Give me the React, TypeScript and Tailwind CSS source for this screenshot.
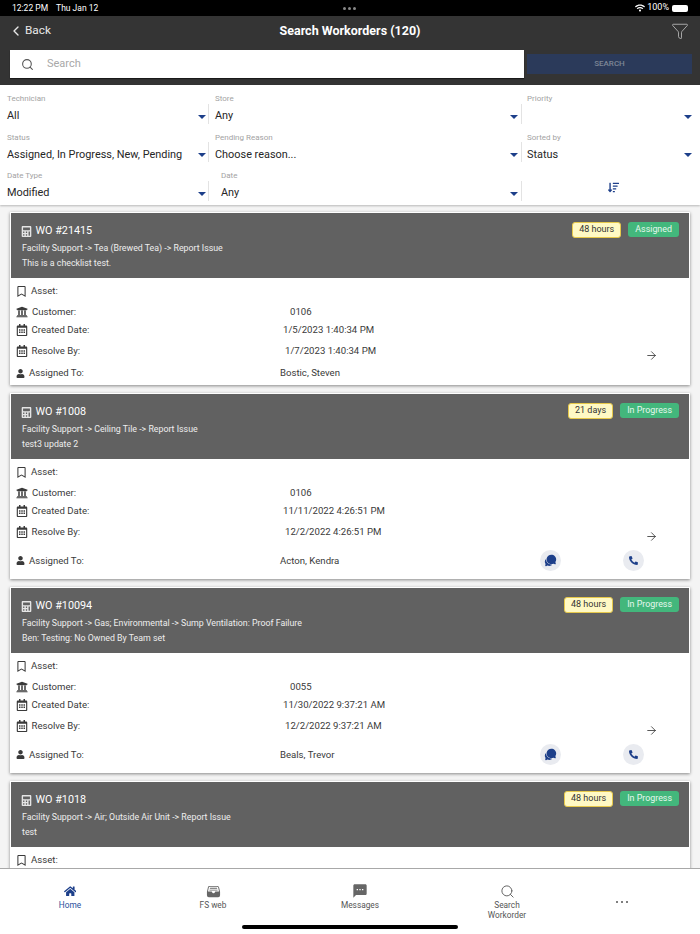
import { ReactNode } from 'react'
import { ChevronLeft, Funnel, Search, ArrowRight } from 'lucide-react'
import { FaCalculator, FaHome, FaPhoneAlt, FaRegBookmark, FaRegCalendarAlt, FaSortAmountDown, FaUniversity, FaUser, FaWifi } from 'react-icons/fa'
import { IoChatbubbles, IoFileTrayFull } from 'react-icons/io5'
import { MdSms } from 'react-icons/md'

const orders = [
  { id: '21415', age: '48 hours', status: 'Assigned', path: 'Facility Support -> Tea (Brewed Tea) -> Report Issue', note: 'This is a checklist test.', customer: '0106', created: '1/5/2023 1:40:34 PM', resolve: '1/7/2023 1:40:34 PM', tech: 'Bostic, Steven', contact: false },
  { id: '1008', age: '21 days', status: 'In Progress', path: 'Facility Support -> Ceiling Tile -> Report Issue', note: 'test3 update 2', customer: '0106', created: '11/11/2022 4:26:51 PM', resolve: '12/2/2022 4:26:51 PM', tech: 'Acton, Kendra', contact: true },
  { id: '10094', age: '48 hours', status: 'In Progress', path: 'Facility Support -> Gas; Environmental -> Sump Ventilation: Proof Failure', note: 'Ben: Testing: No Owned By Team set', customer: '0055', created: '11/30/2022 9:37:21 AM', resolve: '12/2/2022 9:37:21 AM', tech: 'Beals, Trevor', contact: true },
  { id: '1018', age: '48 hours', status: 'In Progress', path: 'Facility Support -> Air; Outside Air Unit -> Report Issue', note: 'test', customer: '', created: '', resolve: '', tech: '', contact: false },
]

function Caret() {
  return <span className="h-0 w-0 border-x-[4px] border-t-[4px] border-x-transparent border-t-[#1d3f8a]" />
}

function Filter({ label, value, width, pad = 'pl-[7px] pr-[3px]', divider = true }: { label: string; value: string; width: string; pad?: string; divider?: boolean }) {
  return (
    <div className={`${width} relative h-[38.5px] ${pad}`}>
      <div className="pt-[9px] text-[8px] leading-[10px] text-[#a3a3a3]">{label}</div>
      <div className="mt-[3.5px] flex h-[18px] items-center justify-between text-[10.9px] text-[#262626]">
        <span className="whitespace-nowrap">{value}</span>
        <Caret />
      </div>
      {divider && <span className="absolute bottom-0 right-0 h-[20px] w-px bg-[#e3e3e3]" />}
    </div>
  )
}

function Row({ icon, label, height, value, valuePad, children }: { icon: ReactNode; label: string; height: string; value?: string; valuePad?: string; children?: ReactNode }) {
  return (
    <div className={`flex ${height} items-center text-[9.6px] text-[#3a3a3a]`}>
      <div className="flex w-[270px] items-center pl-[6px]">
        {icon}
        <span>{label}</span>
      </div>
      <div className={`${valuePad ?? ''} whitespace-nowrap`}>{value}</div>
      {children}
    </div>
  )
}

function OrderCard({ order }: { order: (typeof orders)[number] }) {
  return (
    <div className="mb-[8px] shrink-0 bg-white shadow-[0_1px_3px_rgba(0,0,0,0.45)]">
      <div className="mx-[1px] flex h-[66px] justify-between border-t border-white bg-[#616161] pl-[10px] pr-[10px] text-white">
        <div>
          <div className="flex items-center pt-[11px] text-[10.8px] leading-[14px]">
            <FaCalculator className="mr-[3.5px] text-[11px] text-[#e5e5e5]" />
            <span>WO #{order.id}</span>
          </div>
          <div className="ml-[1px] mt-[3px] text-[8.8px] leading-[14px] text-[#eeeeee]">{order.path}</div>
          <div className="ml-[1px] mt-[1px] text-[8.8px] leading-[14px] text-[#eeeeee]">{order.note}</div>
        </div>
        <div className="flex items-start gap-[7px] pt-[9px]">
          <span className="flex h-[16px] items-center rounded-[3px] border border-[#e6c84a] bg-[#fff9c4] px-[6px] text-[9px] text-[#333333]">{order.age}</span>
          <span className="flex h-[15px] items-center rounded-[3px] bg-[#43b77c] px-[7px] text-[8.9px] text-[#e6f7ee]">{order.status}</span>
        </div>
      </div>
      <div>
        <Row icon={<FaRegBookmark className="mr-[4px] text-[11px]" />} label="Asset:" height="h-[26.5px]" />
        {order.tech && (
          <>
            <Row icon={<FaUniversity className="mr-[4px] text-[12px]" />} label="Customer:" height="h-[15px]" value={order.customer} valuePad="pl-[10px]" />
            <Row icon={<FaRegCalendarAlt className="mr-[3.5px] text-[12px]" />} label="Created Date:" height="h-[22px]" value={order.created} valuePad="pl-[3px]" />
            <Row icon={<FaRegCalendarAlt className="mr-[3.5px] text-[12px]" />} label="Resolve By:" height="h-[20px]" value={order.resolve} valuePad="pl-[5px]">
              <ArrowRight className="ml-auto mr-[32px] mt-[7px] h-[13px] w-[13px] text-[#333333]" strokeWidth={1.5} />
            </Row>
            <Row icon={<FaUser className="mr-[4px] text-[9px]" />} label="Assigned To:" height={order.contact ? 'h-[36.5px]' : 'h-[23.5px]'} value={order.tech}>
              {order.contact && (
                <div className="ml-auto flex gap-[62px] pr-[46px]">
                  <span className="flex h-[21px] w-[21px] items-center justify-center rounded-full bg-[#e9ebf0] text-[#1d3f8a]"><IoChatbubbles className="text-[13px]" /></span>
                  <span className="flex h-[21px] w-[21px] items-center justify-center rounded-full bg-[#e9ebf0] text-[#1d3f8a]"><FaPhoneAlt className="text-[9px]" /></span>
                </div>
              )}
            </Row>
          </>
        )}
      </div>
    </div>
  )
}

function Tab({ width, label, active, children }: { width: string; label: ReactNode; active?: boolean; children: ReactNode }) {
  return (
    <div className={`${width} flex flex-col items-center pt-[14px] text-center text-[8.3px] leading-[10px] ${active ? 'text-[#2a4f9c]' : 'text-[#555555]'}`}>
      <div className={`flex h-[16px] items-center ${active ? 'text-[#1d3f8a]' : 'text-[#666666]'}`}>{children}</div>
      <div className="mt-[1px]">{label}</div>
    </div>
  )
}

export default function App() {
  return (
    <div className="relative flex h-[934px] w-[700px] flex-col overflow-hidden bg-[#f4f4f4] font-['Roboto',sans-serif]">
      <div className="relative flex h-[16px] shrink-0 items-center justify-between bg-black pl-[12px] pr-[12px] text-[8.5px] text-white">
        <div className="flex gap-[8px]">
          <span>12:22 PM</span>
          <span>Thu Jan 12</span>
        </div>
        <div className="absolute left-[343px] top-[7px] flex gap-[2.5px]">
          <span className="h-[2.5px] w-[2.5px] rounded-full bg-[#888888]" />
          <span className="h-[2.5px] w-[2.5px] rounded-full bg-[#888888]" />
          <span className="h-[2.5px] w-[2.5px] rounded-full bg-[#888888]" />
        </div>
        <div className="flex items-center gap-[2px]">
          <FaWifi className="text-[10px]" />
          <span className="text-[9px]">100%</span>
          <span className="ml-[1px] flex h-[7px] w-[16px] items-center rounded-[2px] bg-white" />
        </div>
      </div>

      <div className="h-[69px] shrink-0 bg-[#343434]">
        <div className="relative flex h-[30px] items-center justify-between pl-[8px] pr-[11.5px] text-white">
          <div className="flex items-center text-[11.8px] text-[#e8e8e8]">
            <ChevronLeft className="mr-[1px] h-[16px] w-[16px]" strokeWidth={2} />
            Back
          </div>
          <div className="absolute inset-x-0 text-center text-[12.5px] font-bold">Search Workorders (120)</div>
          <Funnel className="h-[18px] w-[18px] text-[#cccccc]" strokeWidth={1} />
        </div>
        <div className="mt-[4px] flex items-center pl-[10px] pr-[8px]">
          <div className="flex h-[28px] w-[514px] items-center bg-white pl-[11px] shadow-[0_1px_1px_rgba(0,0,0,0.5)]">
            <Search className="h-[13px] w-[13px] text-[#555555]" strokeWidth={2} />
            <span className="ml-[13px] text-[11px] text-[#a8a8a8]">Search</span>
          </div>
          <div className="ml-[3px] flex h-[20px] flex-1 items-center justify-center bg-[#2b3a5a] text-[8px] font-medium text-[#7d8696]">SEARCH</div>
        </div>
      </div>

      <div className="h-[120px] shrink-0 bg-white shadow-[0_1px_2px_rgba(0,0,0,0.25)]">
        <div className="flex">
          <Filter label="Technician" value="All" width="w-[209px]" />
          <Filter label="Store" value="Any" width="w-[313px]" pad="pl-[6px] pr-[4px]" />
          <Filter label="Priority" value="" width="w-[178px]" pad="pl-[5px] pr-[8px]" divider={false} />
        </div>
        <div className="flex">
          <Filter label="Status" value="Assigned, In Progress, New, Pending" width="w-[209px]" />
          <Filter label="Pending Reason" value="Choose reason..." width="w-[313px]" pad="pl-[6px] pr-[4px]" />
          <Filter label="Sorted by" value="Status" width="w-[178px]" pad="pl-[5px] pr-[8px]" divider={false} />
        </div>
        <div className="flex">
          <Filter label="Date Type" value="Modified" width="w-[209px]" />
          <Filter label="Date" value="Any" width="w-[313px]" pad="pl-[12px] pr-[4px]" />
          <div className="flex w-[178px] justify-center pl-[4px] pt-[20px] text-[#1d3f8a]">
            <FaSortAmountDown className="text-[11px]" />
          </div>
        </div>
      </div>

      <div className="flex min-h-0 flex-1 flex-col overflow-hidden px-[10px] pt-[7px]">
        {orders.map((order) => (
          <OrderCard key={order.id} order={order} />
        ))}
      </div>

      <div className="flex h-[66px] shrink-0 border-t border-[#a8a8a8] bg-white">
        <Tab width="w-[140px]" label="Home" active><FaHome className="text-[12.5px]" /></Tab>
        <Tab width="w-[146px]" label="FS web"><IoFileTrayFull className="text-[15px]" /></Tab>
        <Tab width="w-[148px]" label="Messages"><MdSms className="text-[16px]" /></Tab>
        <Tab width="w-[146px]" label={<>Search<br />Workorder</>}><Search className="h-[15px] w-[15px]" strokeWidth={1.6} /></Tab>
        <div className="flex w-[84px] justify-center gap-[3px] pt-[32px]">
          <span className="h-[2px] w-[2px] rounded-full bg-[#555555]" />
          <span className="h-[2px] w-[2px] rounded-full bg-[#555555]" />
          <span className="h-[2px] w-[2px] rounded-full bg-[#555555]" />
        </div>
      </div>
      <div className="absolute bottom-[5px] left-[242px] h-[4px] w-[216px] rounded-full bg-black" />
    </div>
  )
}
